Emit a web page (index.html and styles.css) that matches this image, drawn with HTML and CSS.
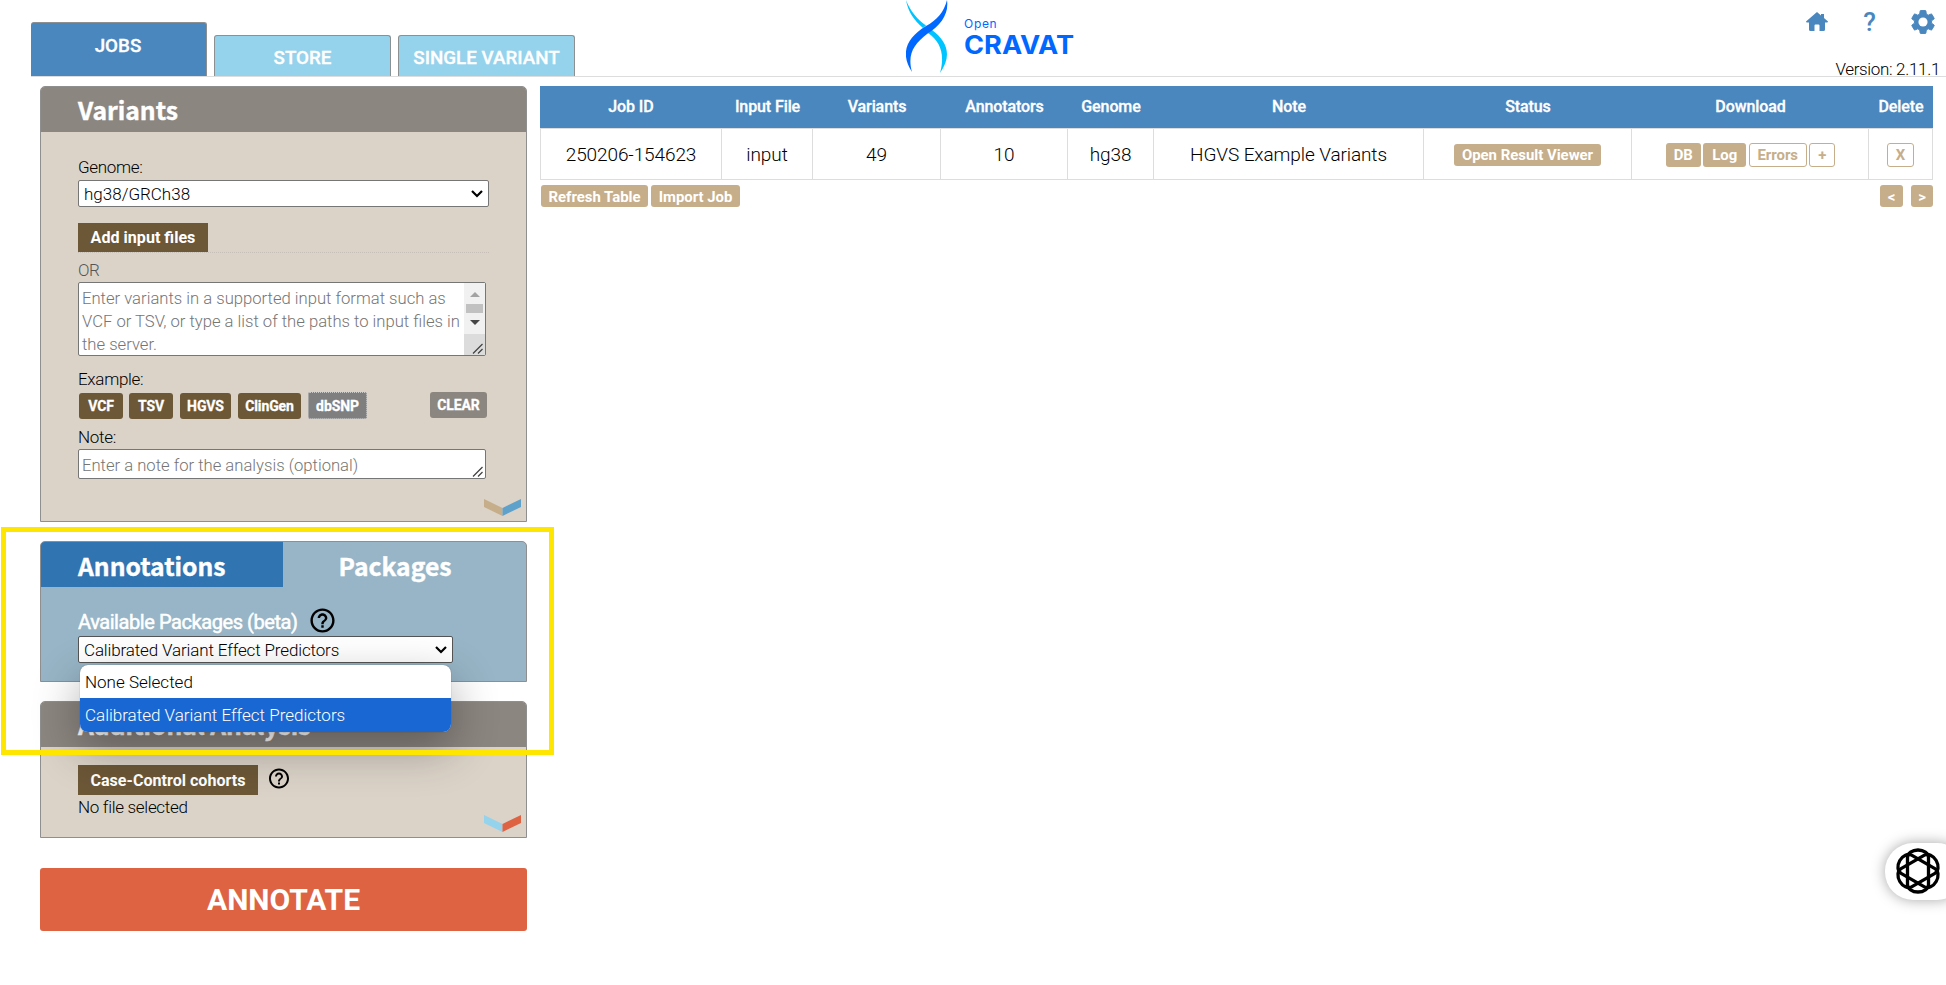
FILE: index.html
```html
<!DOCTYPE html>
<html lang="en">
<head>
<meta charset="utf-8">
<title>OpenCRAVAT</title>
<link rel="stylesheet" href="styles.css">
</head>
<body>
<header class="topbar">
  <nav class="tabs">
    <div class="tab active"><span>JOBS</span></div>
    <div class="tab"><span>STORE</span></div>
    <div class="tab"><span>SINGLE VARIANT</span></div>
  </nav>
  <div class="logo">
    <svg class="helix" viewBox="0 0 42 73" width="42" height="73">
      <path fill="#00c4ff" d="M0 0C2 12 8 20 17 28L20 25.500C12 20 4 11 0 0ZM22 33C35 42 39 55 34 73C46 56 42 42 26 30Z"/>
      <path fill="#0068ff" d="M41 0C38 12 31 20 20 26C0 38-6 54 6 72C1 54 8 44 21 34C35 25 43 14 41 0Z"/>
    </svg>
    <div class="wordmark"><span class="open">Open</span><span class="cravat">CRAVAT</span></div>
  </div>
  <div class="tools">
    <div class="icons">
      <svg width="22" height="20" viewBox="0 0 22 20"><path fill="#4a87be" d="M11 0L0 9.500Q0 10.500 1 10.500H3V17.500Q3 19 4.500 19H8.500V13.500Q8.500 12.500 9.500 12.500H12.500Q13.500 12.500 13.500 13.500V19H17.500Q19 19 19 17.500V10.500H21Q22 10.500 22 9.500L18 6V2H15V3.400Z"/></svg>
      <span class="qmark">?</span>
      <svg width="24" height="24" viewBox="2 2 20 20"><path fill="#4a87be" stroke="#4a87be" stroke-width=".8" stroke-linejoin="round" d="M19.140 12.940c.04-.3.06-.61.06-.94 0-.32-.02-.64-.07-.94l2.030-1.580a.49.49 0 0 0 .12-.61l-1.920-3.320a.49.49 0 0 0-.59-.22l-2.390.96a7 7 0 0 0-1.620-.94l-.36-2.540a.48.48 0 0 0-.48-.41h-3.840a.47.47 0 0 0-.47.41l-.36 2.540c-.59.24-1.130.57-1.620.94l-2.390-.96a.48.48 0 0 0-.59.22L2.740 8.870a.48.48 0 0 0 .12.61l2.030 1.580a7.500 7.500 0 0 0 0 1.880l-2.030 1.580a.49.49 0 0 0-.12.61l1.920 3.320c.12.22.37.29.59.22l2.390-.96c.5.38 1.030.7 1.620.94l.36 2.540c.05.24.24.41.48.41h3.840c.24 0 .44-.17.47-.41l.36-2.540a7 7 0 0 0 1.620-.94l2.390.96c.22.08.47 0 .59-.22l1.920-3.320a.47.47 0 0 0-.12-.61z"/><circle cx="12" cy="12" r="3.800" fill="#fff"/></svg>
    </div>
    <div class="version">Version: 2.11.1</div>
  </div>
</header>

<main class="page">
  <aside class="side">
    <section class="card variants">
      <h2 class="card-head">Variants</h2>
      <div class="card-body">
        <label class="lbl genome-lbl">Genome:</label>
        <div class="select"><span>hg38/GRCh38</span><svg class="chev" width="12" height="8" viewBox="0 0 12 8"><path d="M1 1L6 6L11 1"/></svg></div>
        <div class="add-row"><button class="btn-brown">Add input files</button></div>
        <div class="or">OR</div>
        <div class="area input-area">
          <p>Enter variants in a supported input format such as<br>VCF or TSV, or type a list of the paths to input files in<br>the server.</p>
          <div class="scroll">
            <i class="up"></i><i class="thumb"></i><i class="down"></i>
            <span class="corner"><svg width="11" height="11" viewBox="0 0 11 11"><path d="M1 10.500L10.500 1M6 10.500L10.500 6"/></svg></span>
          </div>
        </div>
        <label class="lbl example-lbl">Example:</label>
        <div class="examples">
          <button class="ex w-vcf">VCF</button><button class="ex w-tsv">TSV</button><button class="ex w-hgvs">HGVS</button><button class="ex w-clin">ClinGen</button><button class="ex w-snp">dbSNP</button>
          <button class="ex clear">CLEAR</button>
        </div>
        <label class="lbl note-lbl">Note:</label>
        <div class="area note-area"><p>Enter a note for the analysis (optional)</p><svg class="grip" width="11" height="11" viewBox="0 0 11 11"><path d="M1 10.500L10.500 1M6 10.500L10.500 6"/></svg></div>
      </div>
      <svg class="fold" width="37" height="17" viewBox="0 0 37 17"><path fill="#c6ae8a" d="M0 0L18.500 9V17L0 8Z"/><path fill="#5ea2cb" d="M37 0L18.500 9V17L37 8Z"/></svg>
    </section>

    <section class="card packages">
      <div class="pk-tabs"><h2 class="pk-tab on">Annotations</h2><h2 class="pk-tab">Packages</h2></div>
      <div class="pk-title"><span>Available Packages (beta)</span>
        <svg width="29" height="29" viewBox="0 0 24 24"><path d="M11 18h2v-2h-2v2zm1-16C6.480 2 2 6.480 2 12s4.480 10 10 10 10-4.480 10-10S17.520 2 12 2zm0 18c-4.410 0-8-3.590-8-8s3.590-8 8-8 8 3.590 8 8-3.590 8-8 8zm0-14c-2.210 0-4 1.790-4 4h2c0-1.100.9-2 2-2s2 .9 2 2c0 2-3 1.750-3 5h2c0-2.250 3-2.500 3-5 0-2.210-1.790-4-4-4z"/></svg>
      </div>
      <div class="select pk-select"><span>Calibrated Variant Effect Predictors</span><svg class="chev" width="12" height="8" viewBox="0 0 12 8"><path d="M1 1L6 6L11 1"/></svg>
        <div class="menu"><div>None Selected</div><div class="sel">Calibrated Variant Effect Predictors</div></div>
      </div>
    </section>

    <section class="card extra">
      <h2 class="card-head">Additional Analysis</h2>
      <div class="card-body extra-body">
        <div class="case-row"><button class="btn-brown case">Case-Control cohorts</button>
          <svg width="24" height="25" viewBox="0 0 24 24"><path d="M11 18h2v-2h-2v2zm1-16C6.480 2 2 6.480 2 12s4.480 10 10 10 10-4.480 10-10S17.520 2 12 2zm0 18c-4.410 0-8-3.590-8-8s3.590-8 8-8 8 3.590 8 8-3.590 8-8 8zm0-14c-2.210 0-4 1.790-4 4h2c0-1.100.9-2 2-2s2 .9 2 2c0 2-3 1.750-3 5h2c0-2.250 3-2.500 3-5 0-2.210-1.790-4-4-4z"/></svg></div>
        <div class="lbl nofile">No file selected</div>
      </div>
      <svg class="fold" width="37" height="17" viewBox="0 0 37 17"><path fill="#95d2ec" d="M0 0L18.500 9V17L0 8Z"/><path fill="#de6343" d="M37 0L18.500 9V17L37 8Z"/></svg>
    </section>
    <button class="annotate">ANNOTATE</button>
  </aside>

  <section class="jobs">
    <div class="grid head">
      <div>Job ID</div><div>Input File</div><div>Variants</div><div>Annotators</div><div>Genome</div><div>Note</div><div>Status</div><div>Download</div><div>Delete</div>
    </div>
    <div class="grid row">
      <div>250206-154623</div><div>input</div><div>49</div><div>10</div><div>hg38</div><div>HGVS Example Variants</div>
      <div class="act"><button class="tan viewer">Open Result Viewer</button></div>
      <div class="act dl"><button class="tan t-db">DB</button><button class="tan t-log">Log</button><button class="tan line t-err">Errors</button><button class="tan line t-plus">+</button></div>
      <div class="act"><button class="tan line t-x">X</button></div>
    </div>
    <div class="foot">
      <button class="tan f-ref">Refresh Table</button><button class="tan f-imp">Import Job</button>
      <button class="tan f-prev">&lt;</button><button class="tan f-next">&gt;</button>
    </div>
  </section>
</main>

<div class="highlight"></div>
<div class="widget">
  <svg width="46" height="46" viewBox="-23 -23 46 46" fill="none" stroke="#000" stroke-width="3.300">
    <g id="loop"><rect x="-10.500" y="-21" width="21" height="42" rx="10.500" ry="7.500"/></g>
    <use href="#loop" transform="rotate(60)"/><use href="#loop" transform="rotate(120)"/>
  </svg>
</div>
</body>
</html>
```

FILE: styles.css
```css
* { box-sizing: border-box; }
body { margin: 0; width: 1946px; height: 985px; overflow: hidden; background: #fff; font-family: Roboto, "Liberation Sans", sans-serif; font-weight: 300; color: #000; position: relative; }
h2, p { margin: 0; }
button { font: inherit; border: 0; padding: 0; margin: 0; color: #fff; white-space: nowrap; }
svg { display: block; flex: none; }

.topbar { height: 77px; margin-left: 31px; border-bottom: 1px solid #ddd; display: flex; align-items: flex-start; }
.tabs { display: flex; align-items: flex-end; gap: 7px; height: 76px; width: 874px; flex: none; }
.tab { width: 177px; height: 41px; background: #95d2ec; border: 1px solid #8c9091; border-bottom: 0; border-radius: 3px 3px 0 0; color: #fff; font-size: 18.800px; font-weight: 500; -webkit-text-stroke: .3px #fff; display: flex; justify-content: center; align-items: center; padding-top: 3px; white-space: nowrap; }
.tab.active { width: 176px; height: 54px; background: #4a87be; border-left: 0; padding: 0 1px 8px 0; }
.logo { display: flex; height: 76px; width: 400px; }
.helix { margin-left: 1px; }
.wordmark { display: flex; flex-direction: column; align-items: flex-start; margin-left: 16px; padding-top: 16px; color: #0068ff; font-family: Inter, "Liberation Sans", sans-serif; }
.open { font-size: 12px; line-height: 16px; font-weight: 400; letter-spacing: .7px; }
.cravat { font-size: 25px; line-height: 26px; font-weight: 700; transform: scaleX(1.085); transform-origin: 0 0; }
.tools { margin-left: auto; width: 140px; padding: 9px 6px 0 0; display: flex; flex-direction: column; align-items: flex-end; }
.icons { display: flex; align-items: center; height: 26px; padding-right: 5px; }
.qmark { width: 83px; text-align: center; font-size: 26px; font-weight: 500; color: #4a87be; line-height: 26px; }
.version { font-size: 17px; letter-spacing: -.33px; line-height: 20px; height: 17px; margin-top: 24px; white-space: nowrap; }

.page { display: flex; gap: 13px; padding: 9px 13px 0 40px; }
.side { width: 487px; flex: none; }
.card { position: relative; border: 1px solid #8f8f8f; border-radius: 5px 5px 0 0; background: #dbd3c8; }
.card-head { height: 45px; background: #8c8680; border-radius: 4px 4px 0 0; padding-left: 37px; }
.card-head, .pk-tab { font: 700 24.700px/45px "Noto Sans CJK SC", "Noto Sans", sans-serif; color: #fff; -webkit-text-stroke: .4px #fff; }
.variants { height: 436px; }
.card-body { padding: 0 37px; }
.lbl { display: block; font-size: 17px; letter-spacing: -.3px; line-height: 20px; }
.genome-lbl { padding-top: 25px; }
.select { position: relative; margin-top: 3px; width: 411px; height: 27px; background: #fff; border: 1px solid #767676; border-radius: 2px; display: flex; align-items: center; justify-content: space-between; padding: 0 5px; font-size: 17px; white-space: nowrap; }
.chev path, .corner path, .grip path { fill: none; stroke: #000; stroke-width: 2.200; }
.corner path, .grip path { stroke: #444; stroke-width: 1.300; }
.add-row { width: 411px; margin-top: 16px; height: 30px; border-bottom: 1px dotted #c5bfb8; }
.btn-brown { display: block; background: #6c5737; width: 130px; height: 29px; font-size: 16.100px; font-weight: 700; }
.or { font-size: 17px; letter-spacing: -.4px; line-height: 20px; margin-top: 7px; color: #555; }
.area { position: relative; width: 408px; background: #fff; border: 1px solid #767676; border-radius: 2px; color: #757575; font-size: 16.650px; line-height: 23px; white-space: nowrap; padding-left: 3px; }
.input-area { height: 74px; margin-top: 2px; padding-top: 4px; display: flex; justify-content: space-between; }
.input-area p { width: 0; flex: 1; }
.scroll { width: 21px; flex: none; height: 72px; margin-top: -4px; background: #f1f1f1; display: flex; flex-direction: column; align-items: center; }
.scroll .up { border: 5px solid transparent; border-top: 0; border-bottom-color: #a3a3a3; margin-top: 9px; }
.thumb { width: 17px; height: 9px; background: #c1c1c1; margin-top: 7px; }
.down { border: 5px solid transparent; border-bottom: 0; border-top-color: #444; margin-top: 7px; }
.corner { width: 21px; height: 21px; background: #dcdcdc; margin-top: auto; display: flex; align-items: flex-end; justify-content: flex-end; padding: 1px 2px; }
.example-lbl { margin-top: 13px; }
.examples { display: flex; align-items: center; height: 27px; margin-top: 3px; padding-left: 1px; width: 409px; }
.ex { height: 26px; border-radius: 3px; background: #6c5737; font-size: 14px; letter-spacing: -.1px; font-weight: 700; -webkit-text-stroke: .3px #fff; }
.w-vcf { width: 44px; } .w-tsv { width: 44px; margin-left: 6px; } .w-hgvs { width: 51px; margin-left: 7px; } .w-clin { width: 63px; margin-left: 7px; }
.w-snp { width: 59px; margin-left: 7px; height: 27px; background: #7f7f80; border: 1px dotted #ccc; border-radius: 2px; }
.clear { width: 57px; margin-left: auto; margin-top: -2px; background: #8c8680; }
.note-lbl { margin-top: 8px; }
.note-area { height: 30px; margin-top: 2px; padding-top: 4px; }
.grip { position: absolute; right: 2px; bottom: 1px; }
.fold { position: absolute; right: 5px; bottom: 5px; }

.packages { margin-top: 19px; height: 141px; background: #97b5c6; z-index: 2; }
.pk-tabs { display: flex; }
.pk-tab { width: 243px; height: 45px; line-height: 46px; text-align: center; border-radius: 0 4px 0 0; }
.pk-tab.on { width: 242px; background: #3074b1; border-radius: 4px 0 0 0; text-align: left; padding-left: 37px; }
.pk-tab:last-child { padding-right: 19px; }
.pk-title { display: flex; align-items: center; height: 30px; margin-top: 18px; padding-left: 37px; gap: 10px; color: #fff; font-size: 20px; letter-spacing: -.43px; font-weight: 400; -webkit-text-stroke: .5px #fff; }
.pk-title span { padding-top: 3px; }
.pk-select { width: 375px; margin: 1px 0 0 37px; border-color: #555; letter-spacing: -.14px; }
.menu { position: absolute; left: 1px; top: 28px; width: 371px; height: 67px; border-radius: 8px; background: #fff; overflow: hidden; font-size: 17px; letter-spacing: 0; box-shadow: 0 0 1px rgba(0,0,0,.5), 0 16px 45px 2px rgba(0,0,0,.3); }
.menu div { height: 33px; line-height: 35px; padding-left: 5px; }
.menu .sel { background: #1967d2; color: #fff; height: 34px; line-height: 34px; }

.extra { margin-top: 19px; height: 137px; }
.extra .fold { bottom: 5px; }
.extra-body { padding-top: 18px; }
.case-row { display: flex; gap: 9px; }
.case-row svg { margin-top: 1px; }
.case { width: 180px; height: 30px; }
.nofile { margin-top: 2px; }
.annotate { display: block; margin-top: 30px; width: 487px; height: 63px; border-radius: 3px; background: #de6343; font-size: 30px; font-weight: 700; }

.jobs { width: 1393px; }
.grid { display: grid; grid-template-columns: 182px 91px 128px 127px 86px 270px 208px 237px 64px; }
.head { height: 42px; background: #4a87be; color: #fff; font-size: 16px; letter-spacing: -.1px; font-weight: 500; -webkit-text-stroke: .3px #fff; line-height: 41px; text-align: center; }
.row { height: 52px; border: 1px solid #ddd; grid-template-columns: 181px 91px 128px 127px 86px 270px 208px 237px 63px; font-size: 19px; letter-spacing: -.1px; }
.row > div { display: flex; align-items: center; justify-content: center; border-right: 1px solid #ddd; white-space: nowrap; }
.row > div:last-child { border-right: 0; }
.row > .act { padding-top: 2px; }
.tan { height: 22px; border-radius: 3px; background: #c6ae8a; font-size: 14.900px; letter-spacing: 0; font-weight: 700; }
.line { background: #fff; border: 1px solid #c6ae8a; color: #c6ae8a; }
.viewer { width: 147px; }
.dl .tan, .t-x { height: 24px; }
.row > .dl { gap: 2.500px; padding-left: 1px; }
.t-db { width: 35px; } .t-log { width: 43px; } .t-err { width: 58px; } .t-plus { width: 26px; } .t-x { width: 27px; }
.foot { display: flex; margin-top: 5px; padding-left: 1px; }
.foot .tan { padding-top: 1px; }
.f-ref { width: 107px; } .f-imp { width: 89px; margin-left: 3px; }
.f-prev { width: 23px; margin-left: auto; } .f-next { width: 22px; margin-left: 8px; }

.highlight { position: absolute; left: 1px; top: 527px; width: 553px; height: 228px; border: 5px solid #ffe600; z-index: 5; }
.widget { position: absolute; left: 1885px; top: 843px; width: 80px; height: 57px; border-radius: 28px; background: #fff; box-shadow: 0 0 14px rgba(0,0,0,.35); padding: 5px 0 0 10px; }
```
